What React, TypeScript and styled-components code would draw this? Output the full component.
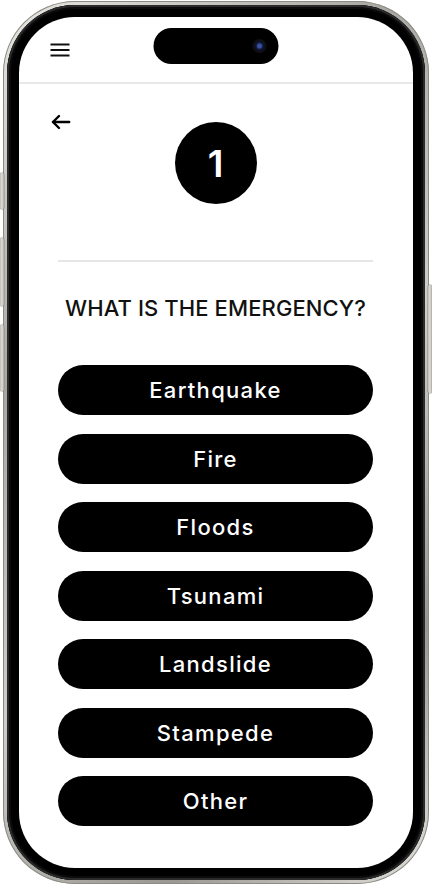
import React from "react";
import styled, { createGlobalStyle } from "styled-components";

const GlobalStyle = createGlobalStyle`
  html, body { margin: 0; padding: 0; background: #ffffff; }
  body { font-family: "Inter", "Noto Sans", sans-serif; }
  * { box-sizing: border-box; }
`;

const Page = styled.div`
  width: 432px;
  height: 886px;
  padding: 1px 3px 2px;
`;

const Phone = styled.div`
  position: relative;
  width: 426px;
  height: 883px;
  border-radius: 72px;
  padding: 4px;
  background: linear-gradient(135deg, #e9e7e1 0%, #a9a7a1 30%, #cfcdc7 55%, #9a9892 80%, #e2e0da 100%);
  box-shadow: inset 0 0 0 1px #8d8b85;
`;

const SideKey = styled.div<{ $side: "left" | "right"; $top: number; $h: number }>`
  position: absolute;
  ${(p) => (p.$side === "left" ? "left: -3px;" : "right: -3px;")}
  top: ${(p) => p.$top}px;
  height: ${(p) => p.$h}px;
  width: 4px;
  border-radius: 2px;
  background: linear-gradient(90deg, #bdbbb5, #e0ded8, #a8a6a0);
  box-shadow: 0 0 0 0.5px #8a8882;
`;

const Bezel = styled.div`
  height: 100%;
  border-radius: 68px;
  background: #000;
  padding: 12px;
  box-shadow: inset 0 0 0 2px #2b2b2b, inset 0 0 0 4px #0b0b0b;
`;

const Screen = styled.div`
  position: relative;
  height: 100%;
  border-radius: 56px;
  background: #ffffff;
  overflow: hidden;
  display: flex;
  flex-direction: column;
`;

const Island = styled.div`
  position: absolute;
  top: 11px;
  left: 50%;
  transform: translateX(-50%);
  width: 125px;
  height: 36px;
  border-radius: 18px;
  background: #000;
  display: flex;
  align-items: center;
  justify-content: flex-end;
  padding-right: 12px;
`;

const Camera = styled.div`
  width: 14px;
  height: 14px;
  border-radius: 50%;
  background: radial-gradient(circle, #3a4fa0 0 2px, #15204a 3px, #0b0d1a 5px, #111 7px);
`;

const Header = styled.header`
  flex-shrink: 0;
  height: 67px;
  display: flex;
  align-items: center;
  padding-left: 31px;
  border-bottom: 2px solid #e8e8e8;
`;

const IconBtn = styled.button`
  border: 0;
  background: none;
  padding: 0;
  margin: 0;
  display: flex;
  cursor: pointer;
`;

const BackBtn = styled(IconBtn)`
  align-self: start;
`;

const Main = styled.main`
  display: flex;
  flex-direction: column;
  padding: 0 40px 0 39px;
`;

const TopRow = styled.div`
  display: grid;
  grid-template-columns: 1fr 82px 1fr;
  margin: 30px -7px 0;
`;

const Badge = styled.div`
  grid-column: 2;
  margin-top: 8px;
  width: 82px;
  height: 82px;
  border-radius: 50%;
  background: #000;
  color: #fff;
  display: flex;
  align-items: center;
  justify-content: center;
  font-family: "Inter", sans-serif;
  font-weight: 600;
  font-size: 37px;
  line-height: 1;
`;

const Divider = styled.hr`
  margin: 56px 0 0;
  border: 0;
  height: 2px;
  background: #e6e6e6;
`;

const Title = styled.h1`
  margin: 30px 0 0;
  text-align: center;
  font-family: "Inter", sans-serif;
  font-weight: 500;
  font-size: 22px;
  line-height: 33px;
  color: #111;
  letter-spacing: 0.1px;
`;

const Options = styled.div`
  display: flex;
  flex-direction: column;
  gap: 18.5px;
  margin-top: 40px;
`;

const Option = styled.button`
  height: 50px;
  width: 100%;
  border: 0;
  border-radius: 25px;
  background: #000;
  color: #fff;
  font-family: "Inter", sans-serif;
  font-weight: 500;
  font-size: 22px;
  letter-spacing: 1.3px;
  cursor: pointer;
`;

const options = ["Earthquake", "Fire", "Floods", "Tsunami", "Landslide", "Stampede", "Other"];

const MenuIcon = () => (
  <svg width="20" height="14" viewBox="0 0 20 14">
    <g stroke="#111" strokeWidth="2" strokeLinecap="butt">
      <line x1="0.5" y1="1.5" x2="19.5" y2="1.5" />
      <line x1="0.5" y1="7" x2="19.5" y2="7" />
      <line x1="0.5" y1="12.5" x2="19.5" y2="12.5" />
    </g>
  </svg>
);

const BackIcon = () => (
  <svg width="20" height="16" viewBox="0 0 20 16">
    <g stroke="#000" strokeWidth="2.4" fill="none" strokeLinecap="round" strokeLinejoin="round">
      <path d="M18.2 8H2" />
      <path d="M8 2L2 8l6 6" />
    </g>
  </svg>
);

export default function App() {
  return (
    <Page>
      <GlobalStyle />
      <Phone>
        <SideKey $side="left" $top={172} $h={36} />
        <SideKey $side="left" $top={237} $h={68} />
        <SideKey $side="left" $top={324} $h={66} />
        <SideKey $side="right" $top={284} $h={108} />
        <Bezel>
          <Screen>
            <Island>
              <Camera />
            </Island>
            <Header>
              <IconBtn aria-label="Menu">
                <MenuIcon />
              </IconBtn>
            </Header>
            <Main>
              <TopRow>
                <BackBtn aria-label="Back">
                  <BackIcon />
                </BackBtn>
                <Badge>1</Badge>
              </TopRow>
              <Divider />
              <Title>WHAT IS THE EMERGENCY?</Title>
              <Options>
                {options.map((o) => (
                  <Option key={o}>{o}</Option>
                ))}
              </Options>
            </Main>
          </Screen>
        </Bezel>
      </Phone>
    </Page>
  );
}
